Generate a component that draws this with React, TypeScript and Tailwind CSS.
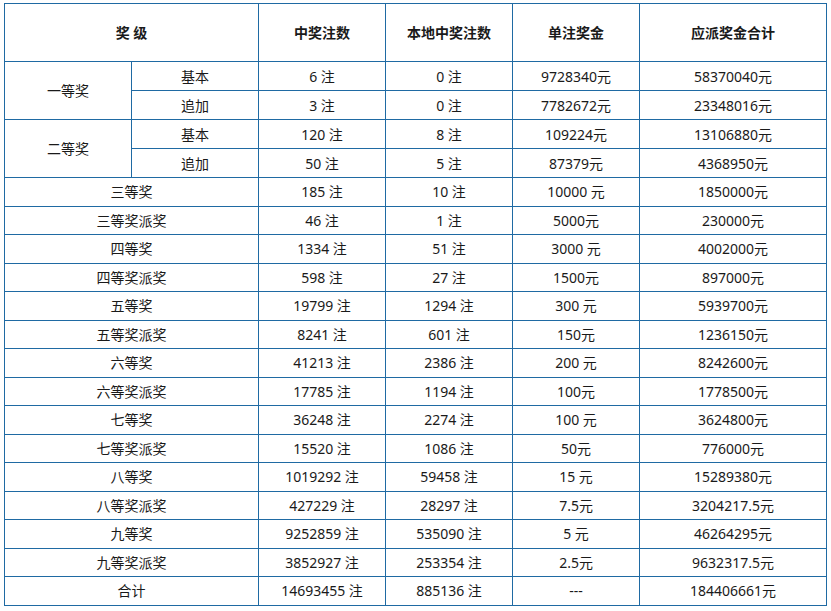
import React from "react";

const rows: [string, string, string, string, string][] = [
  ["三等奖", "185 注", "10 注", "10000 元", "1850000元"],
  ["三等奖派奖", "46 注", "1 注", "5000元", "230000元"],
  ["四等奖", "1334 注", "51 注", "3000 元", "4002000元"],
  ["四等奖派奖", "598 注", "27 注", "1500元", "897000元"],
  ["五等奖", "19799 注", "1294 注", "300 元", "5939700元"],
  ["五等奖派奖", "8241 注", "601 注", "150元", "1236150元"],
  ["六等奖", "41213 注", "2386 注", "200 元", "8242600元"],
  ["六等奖派奖", "17785 注", "1194 注", "100元", "1778500元"],
  ["七等奖", "36248 注", "2274 注", "100 元", "3624800元"],
  ["七等奖派奖", "15520 注", "1086 注", "50元", "776000元"],
  ["八等奖", "1019292 注", "59458 注", "15 元", "15289380元"],
  ["八等奖派奖", "427229 注", "28297 注", "7.5元", "3204217.5元"],
  ["九等奖", "9252859 注", "535090 注", "5 元", "46264295元"],
  ["九等奖派奖", "3852927 注", "253354 注", "2.5元", "9632317.5元"],
  ["合计", "14693455 注", "885136 注", "---", "184406661元"],
];

const td = "border border-[#1f6aa3] text-center align-middle p-0";

export default function App() {
  return (
    <div
      className="w-[831px] h-[611px] bg-white pl-[4px] pt-[3px]"
      style={{ fontFamily: '"Noto Sans", "Noto Sans CJK SC", sans-serif' }}
    >
      <table className="border-collapse table-fixed w-[822px] text-[14px] text-[#1a1a1a]">
        <colgroup>
          <col className="w-[127px]" />
          <col className="w-[127px]" />
          <col className="w-[127px]" />
          <col className="w-[127px]" />
          <col className="w-[127px]" />
          <col className="w-[187px]" />
        </colgroup>
        <tbody>
          <tr className="h-[58px] font-bold">
            <td className={td} colSpan={2}>奖 级</td>
            <td className={td}>中奖注数</td>
            <td className={td}>本地中奖注数</td>
            <td className={td}>单注奖金</td>
            <td className={td}>应派奖金合计</td>
          </tr>
          <tr className="h-[29px]">
            <td className={td} rowSpan={2}>一等奖</td>
            <td className={td}>基本</td>
            <td className={td}>6 注</td>
            <td className={td}>0 注</td>
            <td className={td}>9728340元</td>
            <td className={td}>58370040元</td>
          </tr>
          <tr className="h-[29px]">
            <td className={td}>追加</td>
            <td className={td}>3 注</td>
            <td className={td}>0 注</td>
            <td className={td}>7782672元</td>
            <td className={td}>23348016元</td>
          </tr>
          <tr className="h-[29px]">
            <td className={td} rowSpan={2}>二等奖</td>
            <td className={td}>基本</td>
            <td className={td}>120 注</td>
            <td className={td}>8 注</td>
            <td className={td}>109224元</td>
            <td className={td}>13106880元</td>
          </tr>
          <tr className="h-[29px]">
            <td className={td}>追加</td>
            <td className={td}>50 注</td>
            <td className={td}>5 注</td>
            <td className={td}>87379元</td>
            <td className={td}>4368950元</td>
          </tr>
          {rows.map((r) => (
            <tr key={r[0]} className="h-[28.5px]">
              <td className={td} colSpan={2}>{r[0]}</td>
              <td className={td}>{r[1]}</td>
              <td className={td}>{r[2]}</td>
              <td className={td}>{r[3]}</td>
              <td className={td}>{r[4]}</td>
            </tr>
          ))}
        </tbody>
      </table>
    </div>
  );
}
